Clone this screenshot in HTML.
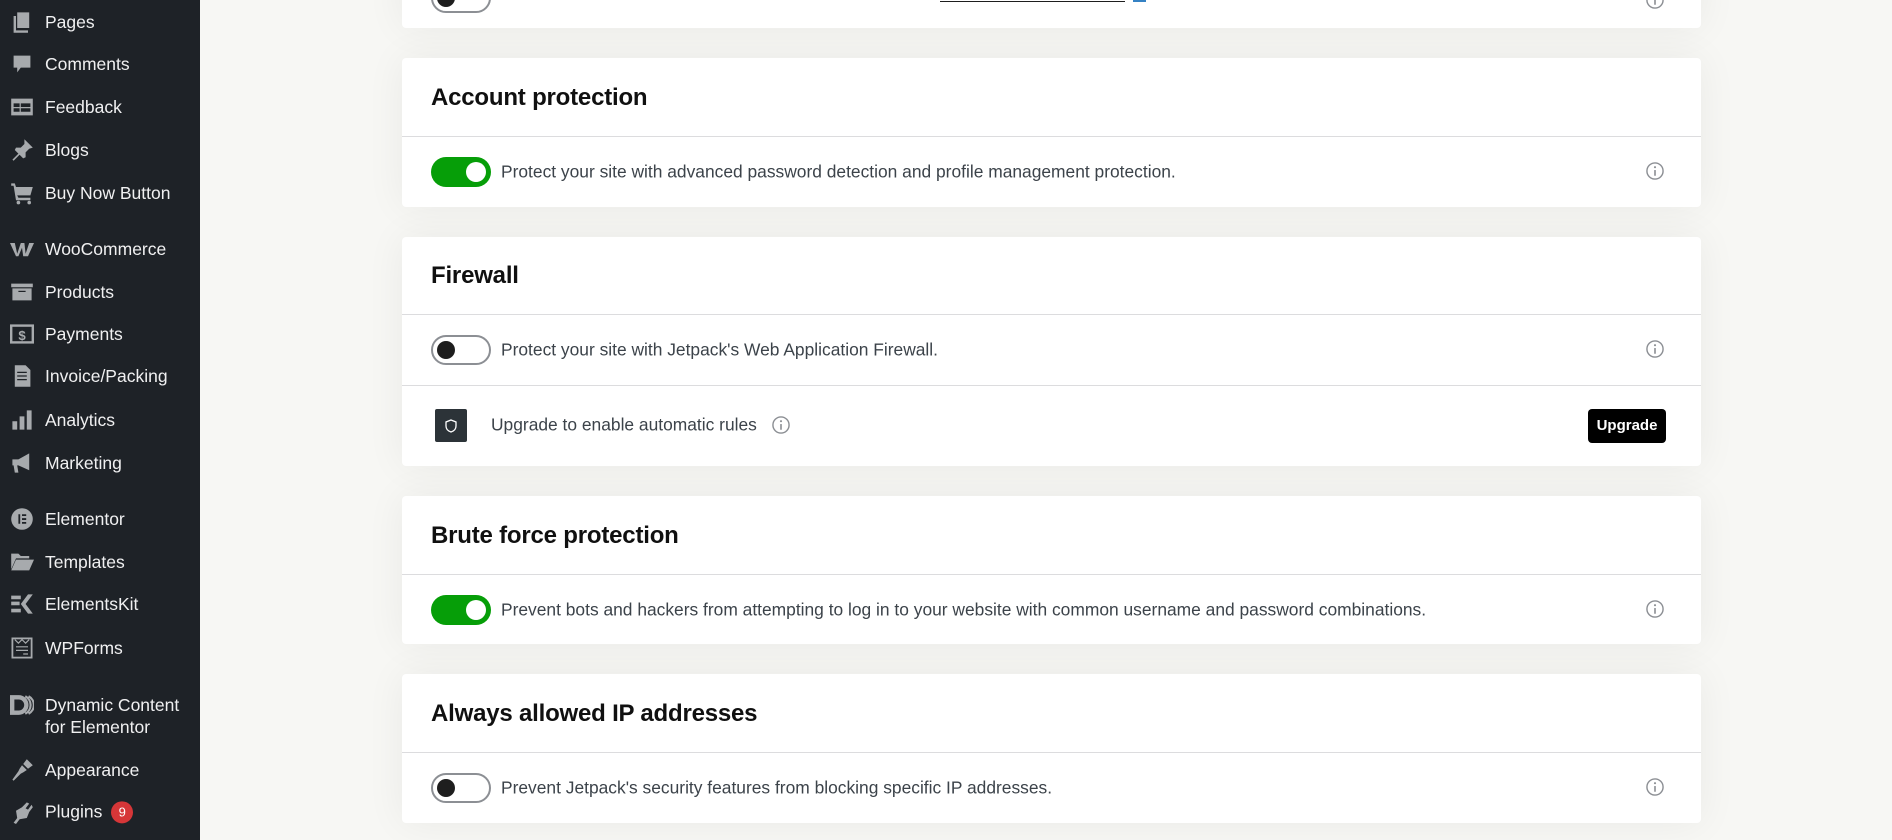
<!DOCTYPE html>
<html><head><meta charset="utf-8"><style>
*{margin:0;padding:0;box-sizing:border-box}
body{width:1892px;height:840px;overflow:hidden;background:#f7f7f4;font-family:"Liberation Sans",sans-serif;position:relative}
#sb{position:absolute;left:0;top:0;width:200px;height:840px;background:#1e2227}
.it{position:absolute;left:45px;color:#f0f0f1;font-size:17.5px;line-height:22px;transform:translateY(-50%)}
.ic{position:absolute;left:10px;width:24px;height:24px;transform:translateY(-50%)}
.card{position:absolute;left:402px;width:1299px;background:#fff;border-radius:4px;box-shadow:0 0 40px rgba(0,0,0,0.06)}
.ttl{position:absolute;left:431px;font-size:24px;font-weight:bold;color:#101010;transform:translateY(-50%);letter-spacing:-0.2px}
.line{position:absolute;left:402px;width:1299px;height:1px;background:#dcdcde}
.tg{position:absolute;left:431px;width:60px;height:30px;border-radius:15px;transform:translateY(-50%)}
.tg.on{background:#069e08}
.tg.on::after{content:"";position:absolute;right:5px;top:5px;width:20px;height:20px;border-radius:50%;background:#fff}
.tg.off{background:#fff;border:2px solid #8c8f94}
.tg.off::after{content:"";position:absolute;left:4px;top:4px;width:18px;height:18px;border-radius:50%;background:#1e1e1e}
.tx{position:absolute;left:501px;font-size:17.4px;color:#3c434a;transform:translateY(-50%);white-space:nowrap}
.inf{position:absolute;width:19px;height:19px;transform:translate(-50%,-50%)}
</style></head><body>
<div id="sb">
<svg class="ic" style="top:22px" viewBox="0 0 20 20"><path fill="#a7aaad" d="M6 2h10v13H6z M3 5h2v12h10v2H3z"/></svg><div class="it" style="top:22px">Pages</div>
<svg class="ic" style="top:64px" viewBox="0 0 20 20"><path fill="#a7aaad" d="M3 3h14v10H9l-3 4v-4H3z"/></svg><div class="it" style="top:64px">Comments</div>
<svg class="ic" style="top:107px" viewBox="0 0 20 20"><path fill="#a7aaad" d="M1 3h18v14H1z"/><path fill="#1e2227" d="M3 7h5v3H3zM9 7h8v3H9zM3 11h5v3H3zM9 11h8v3H9z"/></svg><div class="it" style="top:107px">Feedback</div>
<svg class="ic" style="top:150px" viewBox="0 0 20 20"><path fill="#a7aaad" d="M12 1l7 7-3 1-3 3 0 4-2 1-3-3-5 5-1-1 5-5-3-3 1-2 4 0 3-3z"/></svg><div class="it" style="top:150px">Blogs</div>
<svg class="ic" style="top:193px" viewBox="0 0 20 20"><path fill="#a7aaad" d="M1 2h3l1 3h14l-2 7H6l1 2h10v2H5L3 4H1z"/><circle cx="7" cy="18" r="1.5" fill="#a7aaad"/><circle cx="16" cy="18" r="1.5" fill="#a7aaad"/></svg><div class="it" style="top:193px">Buy Now Button</div>
<svg class="ic" style="top:249px" viewBox="0 0 20 20"><path fill="#a7aaad" d="M0 5h4l2 9 3-9h3l1 9 3-9h4l-5 11h-4l-1-7-3 7H5z"/></svg><div class="it" style="top:249px">WooCommerce</div>
<svg class="ic" style="top:292px" viewBox="0 0 20 20"><path fill="#a7aaad" d="M1 3h18v3H1zM2 7h16v10H2z"/><path fill="#1e2227" d="M7 9h6v1H7z"/></svg><div class="it" style="top:292px">Products</div>
<svg class="ic" style="top:334px" viewBox="0 0 20 20"><rect x="1" y="3" width="18" height="14" fill="none" stroke="#a7aaad" stroke-width="2"/><text x="10" y="15" font-size="11" font-weight="bold" fill="#a7aaad" text-anchor="middle" font-family="Liberation Sans">$</text></svg><div class="it" style="top:334px">Payments</div>
<svg class="ic" style="top:376px" viewBox="0 0 20 20"><path fill="#a7aaad" d="M4 1h9l4 4v14H4z"/><path stroke="#1e2227" d="M6 7h8M6 10h8M6 13h8"/></svg><div class="it" style="top:376px">Invoice/Packing</div>
<svg class="ic" style="top:420px" viewBox="0 0 20 20"><path fill="#a7aaad" d="M2 11h4v7H2zM8 7h4v11H8zM14 2h4v16h-4z"/></svg><div class="it" style="top:420px">Analytics</div>
<svg class="ic" style="top:463px" viewBox="0 0 20 20"><path fill="#a7aaad" d="M2 7h5l9-5v14l-9-4H6l1 6H4l-1-6H2z"/></svg><div class="it" style="top:463px">Marketing</div>
<svg class="ic" style="top:519px" viewBox="0 0 20 20"><circle cx="10" cy="10" r="9" fill="#a7aaad"/><path fill="#1e2227" d="M7 6h1.5v8H7zM10 6h3.5v1.5H10zM10 9.3h3.5v1.5H10zM10 12.5h3.5V14H10z"/></svg><div class="it" style="top:519px">Elementor</div>
<svg class="ic" style="top:562px" viewBox="0 0 20 20"><path fill="#a7aaad" d="M1 3h6l2 2h7v2H5l-4 9zM5 8h15l-4 9H1z"/></svg><div class="it" style="top:562px">Templates</div>
<svg class="ic" style="top:604px" viewBox="0 0 20 20"><path fill="#a7aaad" d="M1 3h8v3H1zM1 8h7v3H1zM1 14h8v3H1zM15 2h4l-6 8 6 8h-4l-6-8z"/></svg><div class="it" style="top:604px">ElementsKit</div>
<svg class="ic" style="top:648px" viewBox="0 0 20 20"><rect x="2" y="2" width="16" height="16" fill="none" stroke="#a7aaad" stroke-width="1.5"/><path stroke="#a7aaad" fill="none" d="M4 3l3 3 3-3 3 3 3-3M5 9h10M5 12h10M11 15h4"/></svg><div class="it" style="top:648px">WPForms</div>
<svg class="ic" style="top:705px" viewBox="0 0 22 20"><path fill="#a7aaad" d="M0 1h8a9 9 0 010 18H0zM4 5v10h4a5 5 0 000-10z"/><path fill="none" stroke="#a7aaad" stroke-width="2" d="M14 2a9 9 0 010 16M17 2a9 9 0 010 16"/></svg><div class="it" style="top:716px">Dynamic Content<br>for Elementor</div>
<svg class="ic" style="top:770px" viewBox="0 0 20 20"><path fill="#a7aaad" d="M14 1l5 5-4 3-4-4zM10 6l4 4-3 2-2 1-6 6-1-1 5-7 1-2z"/></svg><div class="it" style="top:770px">Appearance</div>
<svg class="ic" style="top:812px" viewBox="0 0 20 20"><path fill="#a7aaad" d="M14 2l2 1-3 4 2 1 3-4 1 2-3 4-2 5-6 1-3 4-2-1 3-4-1-6 5-3z"/></svg><div class="it" style="top:812px">Plugins <span style="display:inline-block;width:22px;height:22px;border-radius:50%;background:#d63638;color:#fff;font-size:13px;text-align:center;line-height:22px;margin-left:4px;vertical-align:middle">9</span></div>
</div>

<div class="card" style="top:-40px;height:68px"></div>
<div class="tg off" style="top:-2px"></div>
<div style="position:absolute;left:940px;top:1px;width:185px;height:1px;background:#1e1e1e"></div>
<div style="position:absolute;left:1133px;top:-4px;width:13px;height:6px;background:#3582c4"></div>

<div class="card" style="top:58px;height:149px"></div>
<div class="ttl" style="top:98px">Account protection</div>
<div class="line" style="top:136px"></div>
<div class="tg on" style="top:172px"></div>
<div class="tx" style="top:172px">Protect your site with advanced password detection and profile management protection.</div>

<div class="card" style="top:237px;height:229px"></div>
<div class="ttl" style="top:276px">Firewall</div>
<div class="line" style="top:314px"></div>
<div class="tg off" style="top:350px"></div>
<div class="tx" style="top:350px">Protect your site with Jetpack's Web Application Firewall.</div>
<div class="line" style="top:385px"></div>
<div style="position:absolute;left:435px;top:409px;width:32px;height:33px;background:#2c3338;border-radius:2px"></div>
<svg style="position:absolute;left:443px;top:418px" width="16" height="16" viewBox="0 0 16 16"><path d="M8 2l5 2v4c0 3-2 5-5 6-3-1-5-3-5-6V4z" fill="none" stroke="#fff" stroke-width="1.3"/></svg>
<div class="tx" style="left:491px;top:425px">Upgrade to enable automatic rules</div>
<div style="position:absolute;left:1588px;top:409px;width:78px;height:34px;background:#000;border-radius:4px;color:#fff;font-size:15px;font-weight:bold;text-align:center;line-height:34px">Upgrade</div>

<div class="card" style="top:496px;height:148px"></div>
<div class="ttl" style="top:536px">Brute force protection</div>
<div class="line" style="top:574px"></div>
<div class="tg on" style="top:610px"></div>
<div class="tx" style="top:610px">Prevent bots and hackers from attempting to log in to your website with common username and password combinations.</div>

<div class="card" style="top:674px;height:149px"></div>
<div class="ttl" style="top:714px">Always allowed IP addresses</div>
<div class="line" style="top:752px"></div>
<div class="tg off" style="top:788px"></div>
<div class="tx" style="top:788px">Prevent Jetpack's security features from blocking specific IP addresses.</div>

<svg class="inf" style="left:1655px;top:0px" viewBox="0 0 20 20"><circle cx="10" cy="10" r="8.5" fill="none" stroke="#8c8f94" stroke-width="1.5"/><path d="M10 9v6" stroke="#8c8f94" stroke-width="1.7"/><circle cx="10" cy="6" r="1.1" fill="#8c8f94"/></svg>
<svg class="inf" style="left:1655px;top:171px" viewBox="0 0 20 20"><circle cx="10" cy="10" r="8.5" fill="none" stroke="#8c8f94" stroke-width="1.5"/><path d="M10 9v6" stroke="#8c8f94" stroke-width="1.7"/><circle cx="10" cy="6" r="1.1" fill="#8c8f94"/></svg>
<svg class="inf" style="left:1655px;top:349px" viewBox="0 0 20 20"><circle cx="10" cy="10" r="8.5" fill="none" stroke="#8c8f94" stroke-width="1.5"/><path d="M10 9v6" stroke="#8c8f94" stroke-width="1.7"/><circle cx="10" cy="6" r="1.1" fill="#8c8f94"/></svg>
<svg class="inf" style="left:781px;top:425px" viewBox="0 0 20 20"><circle cx="10" cy="10" r="8.5" fill="none" stroke="#8c8f94" stroke-width="1.5"/><path d="M10 9v6" stroke="#8c8f94" stroke-width="1.7"/><circle cx="10" cy="6" r="1.1" fill="#8c8f94"/></svg>
<svg class="inf" style="left:1655px;top:609px" viewBox="0 0 20 20"><circle cx="10" cy="10" r="8.5" fill="none" stroke="#8c8f94" stroke-width="1.5"/><path d="M10 9v6" stroke="#8c8f94" stroke-width="1.7"/><circle cx="10" cy="6" r="1.1" fill="#8c8f94"/></svg>
<svg class="inf" style="left:1655px;top:787px" viewBox="0 0 20 20"><circle cx="10" cy="10" r="8.5" fill="none" stroke="#8c8f94" stroke-width="1.5"/><path d="M10 9v6" stroke="#8c8f94" stroke-width="1.7"/><circle cx="10" cy="6" r="1.1" fill="#8c8f94"/></svg>
</body></html>
